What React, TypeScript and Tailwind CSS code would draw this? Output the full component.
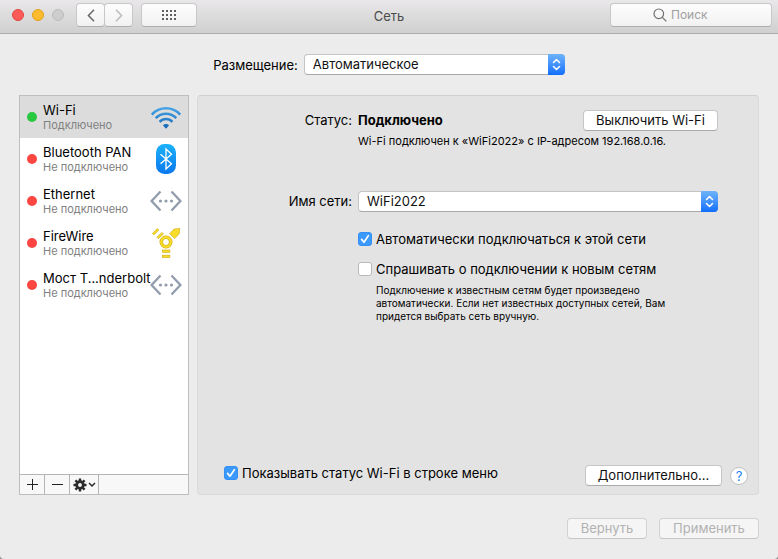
import React from "react";

type Service = {
  name: string;
  status: string;
  online?: boolean;
  icon: React.ReactNode;
};

function WifiIcon() {
  return (
    <svg width="32" height="26" viewBox="0 0 32 26" fill="none" aria-hidden="true">
      <defs>
        <linearGradient id="wifi" x1="0" y1="2" x2="0" y2="24" gradientUnits="userSpaceOnUse">
          <stop offset="0" stopColor="#4aa9ea" />
          <stop offset="1" stopColor="#1668b8" />
        </linearGradient>
      </defs>
      <g stroke="url(#wifi)" strokeWidth="2.5">
        <path d="M1.8 10.600C9.400 2.200 22.600 2.200 30.200 10.600" />
        <path d="M5.700 14.200C11.300 8.100 20.700 8.100 26.300 14.200" />
        <path d="M9.600 17.800C13.200 14 18.800 14 22.400 17.800" />
      </g>
      <path d="M13 21.400c1.600-1.800 4.400-1.800 6 0l-3 3.400z" fill="url(#wifi)" />
    </svg>
  );
}

function BluetoothIcon() {
  return (
    <svg width="32" height="32" viewBox="0 0 32 32" fill="none" aria-hidden="true">
      <defs>
        <linearGradient id="bt" x1="0" y1="0" x2="0" y2="1">
          <stop offset="0" stopColor="#1cb2fb" />
          <stop offset="1" stopColor="#0a78ee" />
        </linearGradient>
      </defs>
      <rect x="6" y="1" width="20" height="30" rx="8.500" fill="url(#bt)" />
      <path d="M10.500 11.200l11 9.600-5.500 5.200V6l5.500 5.200-11 9.600" stroke="#fff" strokeWidth="1.300" />
    </svg>
  );
}

function EthernetIcon() {
  return (
    <svg width="32" height="24" viewBox="0 0 32 24" fill="none" aria-hidden="true">
      <path d="M10.500 2.500L1.600 12l8.900 9.500M21.500 2.500l8.900 9.500-8.900 9.500" stroke="#929cac" strokeWidth="2.300" />
      <g fill="#929cac">
        <circle cx="10.500" cy="12" r="1.600" />
        <circle cx="16" cy="12" r="1.600" />
        <circle cx="21.500" cy="12" r="1.600" />
      </g>
    </svg>
  );
}

function FireWireIcon() {
  return (
    <svg width="32" height="32" viewBox="0 0 32 32" fill="none" aria-hidden="true">
      <circle cx="16" cy="15" r="4.700" stroke="#cfa912" strokeWidth="3.600" />
      <circle cx="16" cy="15" r="4.700" stroke="#f7dc2a" strokeWidth="2.400" />
      <g fill="#f7dc2a" stroke="#cfa912" strokeWidth=".6">
        <path d="M24 2l5.800-.6-.6 5.400-4.600 4.800-5-4.800z" />
        <path d="M2.400 6.400L7.400 1.600l1.500 1.500-5 4.800z" />
        <path d="M6.900 10.200l5-4.800 1.500 1.500-5 4.800z" />
        <rect x="12.300" y="23" width="7.600" height="2.300" />
        <rect x="12.300" y="28.200" width="7.600" height="2.300" />
      </g>
    </svg>
  );
}

const services: Service[] = [
  { name: "Wi-Fi", status: "Подключено", online: true, icon: <WifiIcon /> },
  { name: "Bluetooth PAN", status: "Не подключено", icon: <BluetoothIcon /> },
  { name: "Ethernet", status: "Не подключено", icon: <EthernetIcon /> },
  { name: "FireWire", status: "Не подключено", icon: <FireWireIcon /> },
  { name: "Мост T...nderbolt", status: "Не подключено", icon: <EthernetIcon /> },
];

function PopUp({ id, value, className }: { id: string; value: string; className: string }) {
  return (
    <div className={`relative h-[21px] ${className}`}>
      <select
        id={id}
        defaultValue={value}
        className="h-full w-full appearance-none rounded-[4px] border border-[#c4c4c4] border-b-[#a8a8a8] bg-white pr-5 pl-2 text-[13px] leading-[19px] text-[#111]"
      >
        <option>{value}</option>
      </select>
      <span className="pointer-events-none absolute inset-y-0 right-0 flex w-[17px] items-center justify-center rounded-r-[4px] bg-linear-to-b from-[#6db3fa] to-[#0d6efb]">
        <svg width="9" height="13" viewBox="0 0 9 13" fill="none" stroke="#fff" strokeWidth="1.6" strokeLinecap="round" strokeLinejoin="round" aria-hidden="true">
          <path d="M1.5 4.500l3-3 3 3M1.500 8.500l3 3 3-3" />
        </svg>
      </span>
    </div>
  );
}

function Check({ label, checked = false }: { label: string; checked?: boolean }) {
  return (
    <label className="flex h-4 items-center gap-1 whitespace-nowrap">
      <span className="grid size-[14px] shrink-0">
        <input
          type="checkbox"
          defaultChecked={checked}
          className="peer col-start-1 row-start-1 size-[14px] appearance-none rounded-[3px] border border-[#b9b9b9] bg-white checked:border-[#3490f6] checked:bg-[#3b99fc]"
        />
        <svg viewBox="0 0 14 14" className="pointer-events-none col-start-1 row-start-1 hidden size-[14px] peer-checked:block" fill="none" stroke="#fff" strokeWidth="1.7" strokeLinecap="round" strokeLinejoin="round" aria-hidden="true">
          <path d="M3.6 7.400l2.400 2.800 4.400-6.600" />
        </svg>
      </span>
      {label}
    </label>
  );
}

function PushButton({ children, className, disabled }: { children: React.ReactNode; className: string; disabled?: boolean }) {
  return (
    <button
      type="button"
      disabled={disabled}
      className={`h-[21px] shrink-0 rounded-[4px] border border-[#c6c6c6] border-b-[#ababab] bg-white leading-[19px] whitespace-nowrap text-[#111] disabled:border-[#d2d2d2] disabled:border-b-[#c6c6c6] disabled:bg-[#f5f5f5] disabled:text-[#b2b2b2] ${className}`}
    >
      {children}
    </button>
  );
}

const toolButton =
  "flex h-6 items-center justify-center border border-[#c9c8c9] border-b-[#aeaeae] bg-linear-to-b from-[#fdfdfd] to-[#f2f2f2]";

export default function App() {
  return (
    <div className="min-h-screen bg-[#8f8f8f]">
      <div className="flex min-h-screen flex-col rounded-b-[4px] bg-[#ececec] font-['Inter','Liberation_Sans',sans-serif] text-[13px] leading-4 text-black">
        <header className="grid h-[34px] grid-cols-[1fr_auto_1fr] items-start border-b border-[#acacac] bg-linear-to-b from-[#e9e7e9] to-[#d0d0d0] px-[6px] pt-[3px]">
          <div className="flex items-center pl-[6px]">
            <div className="flex gap-2">
              <button type="button" aria-label="Закрыть" className="size-3 rounded-full border border-[#e2463f] bg-[#fc5b57]" />
              <button type="button" aria-label="Свернуть" className="size-3 rounded-full border border-[#e1a116] bg-[#fdbc2e]" />
              <button type="button" aria-label="Развернуть" className="size-3 rounded-full border border-[#bbb] bg-[#cdcdcd]" />
            </div>
            <div className="ml-3 flex">
              <button type="button" aria-label="Назад" className={`w-[29px] rounded-[4px] ${toolButton}`}>
                <svg width="8" height="13" viewBox="0 0 8 13" fill="none" stroke="#6b6b6b" strokeWidth="1.600" aria-hidden="true">
                  <path d="M7 .8L1.500 6.500 7 12.200" />
                </svg>
              </button>
              <button type="button" aria-label="Вперёд" className={`-ml-px w-[29px] rounded-[4px] ${toolButton}`}>
                <svg width="8" height="13" viewBox="0 0 8 13" fill="none" stroke="#bdbdbd" strokeWidth="1.600" aria-hidden="true">
                  <path d="M1 .8l5.500 5.700L1 12.200" />
                </svg>
              </button>
            </div>
            <button type="button" aria-label="Показать все" className={`ml-2 w-14 rounded-[4px] ${toolButton}`}>
              <svg width="14" height="10" viewBox="0 0 14 10" fill="#5f5f5f" aria-hidden="true">
                {[0, 4, 8].map((y) => [0, 4, 8, 12].map((x) => <rect key={`${x}-${y}`} x={x} y={y} width="2" height="2" />))}
              </svg>
            </button>
          </div>
          <h1 className="pt-[5px] text-[13px] text-[#4a4a4a]">Сеть</h1>
          <label className="flex h-6 w-[162px] items-center justify-self-end rounded-[4px] border border-[#c9c8c9] border-b-[#aeaeae] bg-linear-to-b from-[#fdfdfd] to-[#f2f2f2] pl-[42px]">
            <svg width="14" height="14" viewBox="0 0 14 14" fill="none" stroke="#707070" strokeWidth="1.2" aria-hidden="true">
              <circle cx="5.8" cy="5.8" r="4.8" />
              <path d="M9.3 9.300l4 4" />
            </svg>
            <input type="text" aria-label="Поиск" placeholder="Поиск" className="ml-1 w-20 bg-transparent text-[12px] leading-4 outline-none placeholder:text-[#a0a0a0]" />
          </label>
        </header>

        <main className="flex flex-1 flex-col px-[19px] pt-5 pb-5">
          <div className="flex items-center justify-center gap-[6px]">
            <label htmlFor="location">Размещение:</label>
            <PopUp id="location" value="Автоматическое" className="w-[261px]" />
          </div>

          <div className="mt-5 flex flex-1 gap-2">
            <aside className="flex w-[170px] shrink-0 flex-col border border-[#bdbdbd] bg-white">
              <ul className="flex-1">
                {services.map((s) => (
                  <li key={s.name} className={`flex h-[42px] items-center pl-[7px] ${s.online ? "bg-[#dcdcdc]" : ""}`}>
                    <span className={`size-[10px] shrink-0 rounded-full ${s.online ? "bg-[#28c840]" : "bg-[#fc4642]"}`} />
                    <div className="ml-[6px] w-[107px] whitespace-nowrap">
                      <p className="leading-[15px]">{s.name}</p>
                      <p className="text-[11px] leading-[14px] text-[#808080]">{s.status}</p>
                    </div>
                    {s.icon}
                  </li>
                ))}
              </ul>
              <div className="flex h-5 border-t border-[#b5b5b5] bg-[#f8f8f8]">
                <button type="button" aria-label="Добавить" className="flex w-[25px] items-center justify-center border-r border-[#b5b5b5]">
                  <svg width="11" height="11" viewBox="0 0 11 11" stroke="#222" aria-hidden="true">
                    <path d="M5.5 0v11M0 5.500h11" />
                  </svg>
                </button>
                <button type="button" aria-label="Удалить" className="flex w-[25px] items-center justify-center border-r border-[#b5b5b5]">
                  <svg width="11" height="11" viewBox="0 0 11 11" stroke="#222" aria-hidden="true">
                    <path d="M0 5.500h11" />
                  </svg>
                </button>
                <button type="button" aria-label="Действия" className="flex w-[29px] items-center justify-center gap-px border-r border-[#b5b5b5]">
                  <svg width="14" height="14" viewBox="0 0 14 14" fill="none" stroke="#2b2b2b" aria-hidden="true">
                    <circle cx="7" cy="7" r="3.300" strokeWidth="2.800" />
                    <path strokeWidth="2.400" d="M7 .5V3M7 11v2.500M.5 7H3M11 7h2.500M2.400 2.400l1.800 1.800M9.800 9.800l1.800 1.800M2.400 11.600l1.800-1.800M9.800 4.200l1.800-1.800" />
                  </svg>
                  <svg width="8" height="6" viewBox="0 0 8 6" fill="none" stroke="#2b2b2b" strokeWidth="1.5" aria-hidden="true">
                    <path d="M1 1l3 3 3-3" />
                  </svg>
                </button>
              </div>
            </aside>

            <section className="flex flex-1 flex-col rounded-[4px] border border-[#dadada] border-t-[#d0d0d0] bg-[#e3e3e3]">
              <div className="grid grid-cols-[154px_1fr] gap-x-[6px] pt-[14px] pr-10">
                <span className="pt-[2px] text-right">Статус:</span>
                <div>
                  <div className="flex items-start justify-between">
                    <strong className="pt-[2px] font-bold text-black">Подключено</strong>
                    <PushButton className="w-[135px]">Выключить Wi-Fi</PushButton>
                  </div>
                  <p className="pt-[3px] text-[11px] leading-[14px] whitespace-nowrap">
                    Wi-Fi подключен к «WiFi2022» с IP-адресом 192.168.0.16.
                  </p>
                </div>
                <label htmlFor="network" className="mt-[43px] pt-[2px] text-right">Имя сети:</label>
                <PopUp id="network" value="WiFi2022" className="mt-[43px]" />
                <div className="col-start-2 mt-[19px] flex flex-col gap-[14px]">
                  <Check label="Автоматически подключаться к этой сети" checked />
                  <Check label="Спрашивать о подключении к новым сетям" />
                </div>
                <p className="col-start-2 mt-[7px] max-w-[330px] pl-[18px] text-[10px] leading-[13px]">
                  Подключение к известным сетям будет произведено автоматически. Если нет известных доступных сетей, Вам придется выбрать сеть вручную.
                </p>
              </div>
              <div className="mt-auto flex items-start pr-[10px] pb-2 pl-[26px]">
                <Check label="Показывать статус Wi-Fi в строке меню" checked />
                <PushButton className="ml-auto w-[137px]">Дополнительно...</PushButton>
                <button type="button" aria-label="Справка" className="ml-2 flex size-[18px] shrink-0 items-center justify-center self-center rounded-full border border-[#c0c0c0] bg-white text-[13px] text-[#1a82fb]">
                  ?
                </button>
              </div>
            </section>
          </div>

          <footer className="mt-[23px] flex justify-end gap-3">
            <PushButton className="w-20" disabled>Вернуть</PushButton>
            <PushButton className="w-[100px]" disabled>Применить</PushButton>
          </footer>
        </main>
      </div>
    </div>
  );
}
